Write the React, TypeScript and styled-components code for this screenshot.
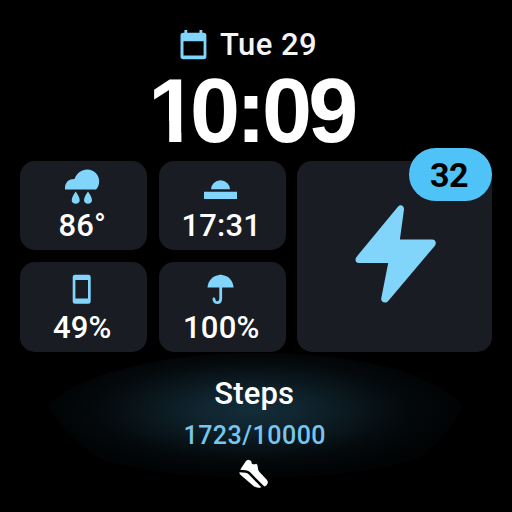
import React from "react";
import styled, { createGlobalStyle } from "styled-components";

const Global = createGlobalStyle`
  * { box-sizing: border-box; }
  body { margin: 0; background: #000; }
`;

const SKY = "#81d4fa";

const Face = styled.main`
  position: relative;
  width: 512px;
  height: 512px;
  overflow: hidden;
  background: #000;
  color: #fff;
  font-family: Roboto, sans-serif;
  font-weight: 500;
  display: flex;
  flex-direction: column;
`;

const Glow = styled.div`
  position: absolute;
  left: 48px;
  top: 352px;
  width: 415px;
  height: 127px;
  background: radial-gradient(ellipse 205px 66px at 203px 58px, #132d39 0%, #10252f 25%, #0a171d 50%, #04090c 75%, #010304 100%);
  clip-path: path("M0 53 C34 20 120 1 207 1 C300 1 385 18 415 54 C404 75 385 101 364 108 C320 121 260 126 207 126 C150 126 90 119 52 107 C35 96 10 72 0 53Z");
`;

const DateRow = styled.div`
  display: flex;
  height: 34px;
  margin: 28px 0 0 180px;
  gap: 13px;
  font-size: 31px;
  line-height: 34px;
  letter-spacing: 0.45px;
  color: #f4f4f4;
`;

const Clock = styled.div`
  display: flex;
  height: 98.5px;
  padding-left: 148px;
  font-family: "Liberation Sans", sans-serif;
  font-weight: 700;
  font-size: 90px;
  line-height: 98px;
  letter-spacing: -4px;
`;

/* Trims the foot serif so the digit is a plain flag and stem. */
const LeadDigit = styled.span`
  letter-spacing: -8px;
  clip-path: polygon(0 0, 33.4px 0, 33.4px 100%, 21.2px 100%, 21.2px 60%, 0 60%);
`;

const Grid = styled.section`
  position: relative;
  display: grid;
  grid-template-columns: 127px 127px 194px;
  grid-template-rows: 89.5px 89.5px;
  column-gap: 12px;
  row-gap: 12px;
  margin-left: 20.3px;
`;

const Tile = styled.div`
  display: flex;
  flex-direction: column;
  align-items: center;
  border-radius: 15px;
  background: #1a1c23;
`;

const BigTile = styled(Tile)`
  position: relative;
  grid-column: 3;
  grid-row: 1 / 3;
  margin-left: -1.3px;
`;

const Value = styled.div`
  font-size: 31px;
  line-height: 36px;
  height: 36px;
  margin-top: 1.5px;
  letter-spacing: 0.2px;
  padding-right: 3px;
`;

const Badge = styled.div`
  position: absolute;
  right: 0.8px;
  top: -13px;
  width: 83px;
  height: 53px;
  border-radius: 27px;
  background: #4fc3f7;
  color: #000;
  font-size: 34px;
  font-weight: 700;
  line-height: 54px;
  text-align: center;
  letter-spacing: -0.4px;
  padding-right: 2px;
`;

const Steps = styled.section`
  position: relative;
  display: flex;
  flex-direction: column;
  align-items: center;
  width: 508.5px;
  padding-top: 23px;
`;

const StepsTitle = styled.div`
  font-size: 31px;
  line-height: 38px;
  letter-spacing: 0.2px;
`;

const StepsCount = styled.div`
  margin: 8px 0 7px;
  font-size: 25px;
  line-height: 30px;
  letter-spacing: 0.5px;
  padding-left: 1px;
  color: #78c6ee;
`;

const Icon = styled.svg`
  display: block;
  flex: none;
`;

const CalendarIcon = () => (
  <Icon width="27" height="32" viewBox="0 0 27 32" fill={SKY}>
    <path fillRule="evenodd" d="M4.4 2h2.8v2.8h12.3V2h2.8v2.8h1.4q2.7 0 2.7 2.7V28.500q0 2.700-2.700 2.700H3.200Q.5 31.200.5 28.500V7.500Q.5 4.800 3.200 4.800h1.200zM3.500 13.300V27.600H23.600V13.300z" />
  </Icon>
);

const RainIcon = () => (
  <Icon width="127" height="46" viewBox="0 0.7 127 46" fill={SKY}>
    <path d="M45 29.200V27.500C45 22 49 18.600 54.500 18.700C57 12.700 61.500 9.200 67.300 9.200C74 9.200 79.200 14.500 79.200 21C79.200 24.500 78 27.500 76 29.200Z" />
    <path d="M55.700 31.300C57.800 34.500 59.700 37.500 59.700 39.900C59.700 42.100 58 43.500 55.700 43.500C53.400 43.500 51.700 42.100 51.700 39.900C51.700 37.500 53.600 34.500 55.700 31.300ZM68 31.300C70.100 34.500 72 37.500 72 39.900C72 42.100 70.300 43.500 68 43.500C65.700 43.500 64 42.100 64 39.900C64 37.500 65.900 34.500 68 31.300Z" />
  </Icon>
);

const SunsetIcon = () => (
  <Icon width="127" height="46" viewBox="0 0 127 46" fill={SKY}>
    <path d="M52 28.200A9.500 8.900 0 0 1 71 28.200Z" />
    <path d="M45 30.700H78V38.100H45Z" />
  </Icon>
);

const PhoneIcon = () => (
  <Icon width="127" height="46" viewBox="0 0 127 46" fill={SKY}>
    <path fillRule="evenodd" d="M55 12.800H68.400Q70.700 12.800 70.700 15.100V39.500Q70.700 41.800 68.400 41.800H55Q52.700 41.800 52.700 39.500V15.100Q52.700 12.800 55 12.800ZM55.400 18V36.500H68V18Z" />
  </Icon>
);

const UmbrellaIcon = () => (
  <Icon width="127" height="46" viewBox="0 0 127 46" fill={SKY}>
    <path d="M48.500 25.600C48.900 18.500 54 13.400 60.200 12.900Q61.600 12.300 63 12.900C69.500 13.400 74.200 18.500 74.600 25.600Z" />
    <path d="M61.700 25V36.800C61.700 41.900 54.900 41.900 54.900 36.800" fill="none" stroke={SKY} strokeWidth="2.800" strokeLinecap="round" />
  </Icon>
);

const BoltIcon = () => (
  <Icon width="195" height="192" viewBox="0.3 0.6 195 192" fill={SKY}>
    <path d="M101 46.500C103.200 43.500 107.600 45 107.300 49L103.200 79H135.500C139 79 140.200 83 138 85.500L91.500 140.500C89 143.500 84 142 84.500 138L91.500 102.500H62C58.800 102.500 57.800 99 59.800 96.500Z" />
  </Icon>
);

const ShoeIcon = () => (
  <Icon width="30" height="31" viewBox="0 0 30 31" fill="#fff">
    <path d="M1.200 11.800L6.600 3.400Q8.500.800 11 2.200Q12.800 3 12.700 5.400Q14.800 7.100 17.200 5.800Q18.600 6.300 18.700 8.500Q18.700 12.200 20.500 14L27.800 21.700Q29.300 23.500 28.600 25.400Q27.800 27.700 25.300 28.500L11.500 14.600Q9.600 12.600 6.800 12.300Z" />
    <path d="M.5 14.200L6.500 14.700Q8.300 14.900 9.600 16.200L22.300 29.200Q18 30.700 14.200 27.700L1.400 16.800Q.3 15.700.5 14.200Z" />
  </Icon>
);

export default function App() {
  return (
    <Face>
      <Global />
      <Glow />
      <DateRow>
        <CalendarIcon />
        <span>Tue 29</span>
      </DateRow>
      <Clock>
        <LeadDigit>1</LeadDigit>
        <span>0:09</span>
      </Clock>
      <Grid>
        <Tile>
          <RainIcon />
          <Value>86°</Value>
        </Tile>
        <Tile>
          <SunsetIcon />
          <Value>17:31</Value>
        </Tile>
        <BigTile>
          <BoltIcon />
          <Badge>32</Badge>
        </BigTile>
        <Tile>
          <PhoneIcon />
          <Value>49%</Value>
        </Tile>
        <Tile>
          <UmbrellaIcon />
          <Value>100%</Value>
        </Tile>
      </Grid>
      <Steps>
        <StepsTitle>Steps</StepsTitle>
        <StepsCount>1723/10000</StepsCount>
        <ShoeIcon />
      </Steps>
    </Face>
  );
}
